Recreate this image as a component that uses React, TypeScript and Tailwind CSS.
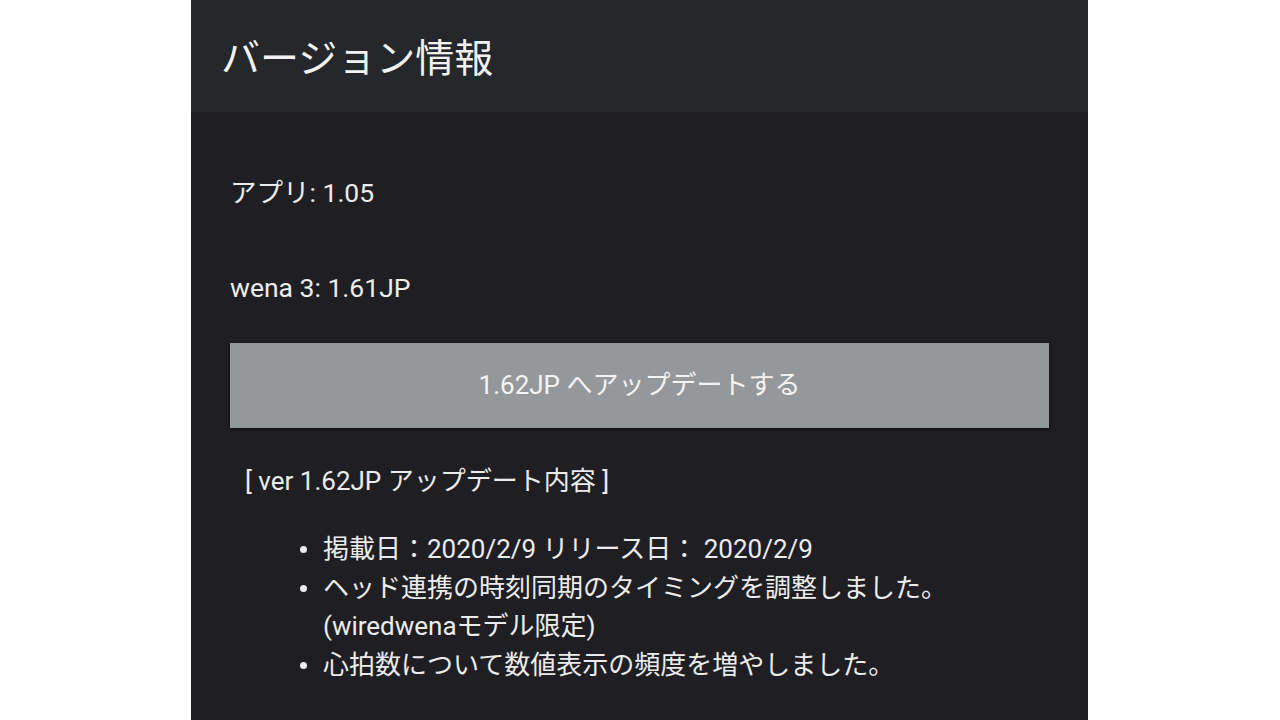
export default function App() {
  const notes = [
    ['掲載日：2020/2/9 リリース日： 2020/2/9'],
    ['ヘッド連携の時刻同期のタイミングを調整しました。', '(wiredwenaモデル限定)'],
    ['心拍数について数値表示の頻度を増やしました。'],
  ];

  return (
    <div
      className="w-[1280px] h-[720px] bg-white flex overflow-hidden"
      style={{ fontFamily: 'Roboto, "Noto Sans CJK JP", sans-serif' }}
    >
      <div className="ml-[191px] w-[897px] h-full bg-[#1f1f23] flex flex-col">
        <div className="h-[112px] shrink-0 bg-[#25272b] flex items-center">
          <h1 className="pl-[30px] mt-[6px] text-[39px] text-[#f2f2f2] leading-none">バージョン情報</h1>
        </div>

        <div className="px-[39px] flex flex-col">
          <p className="mt-[65px] text-[26.5px] leading-[32px] text-[#ececec]">アプリ: 1.05</p>
          <p className="mt-[63px] text-[26.5px] leading-[32px] text-[#ececec]">wena 3: 1.61JP</p>

          <button className="mt-[39px] h-[85px] w-full bg-[#95989b] shadow-[0_1px_3px_rgba(0,0,0,0.6)] text-[26px] text-[#f4f4f4]">
            1.62JP へアップデートする
          </button>

          <p className="mt-[37px] pl-[15px] text-[26px] leading-[32px] text-[#ececec]">
            [ ver 1.62JP アップデート内容 ]
          </p>

          <ul className="mt-[33px] pl-[70px] flex flex-col">
            {notes.map((lines, i) => (
              <li key={i} className="flex text-[26px] leading-[38.5px] text-[#ececec]">
                <span className="w-[23px] shrink-0 flex items-start pt-[16px]">
                  <span className="w-[7px] h-[7px] rounded-full bg-[#ececec]" />
                </span>
                <span className="flex flex-col">
                  {lines.map((l) => (
                    <span key={l}>{l}</span>
                  ))}
                </span>
              </li>
            ))}
          </ul>
        </div>
      </div>
    </div>
  );
}
